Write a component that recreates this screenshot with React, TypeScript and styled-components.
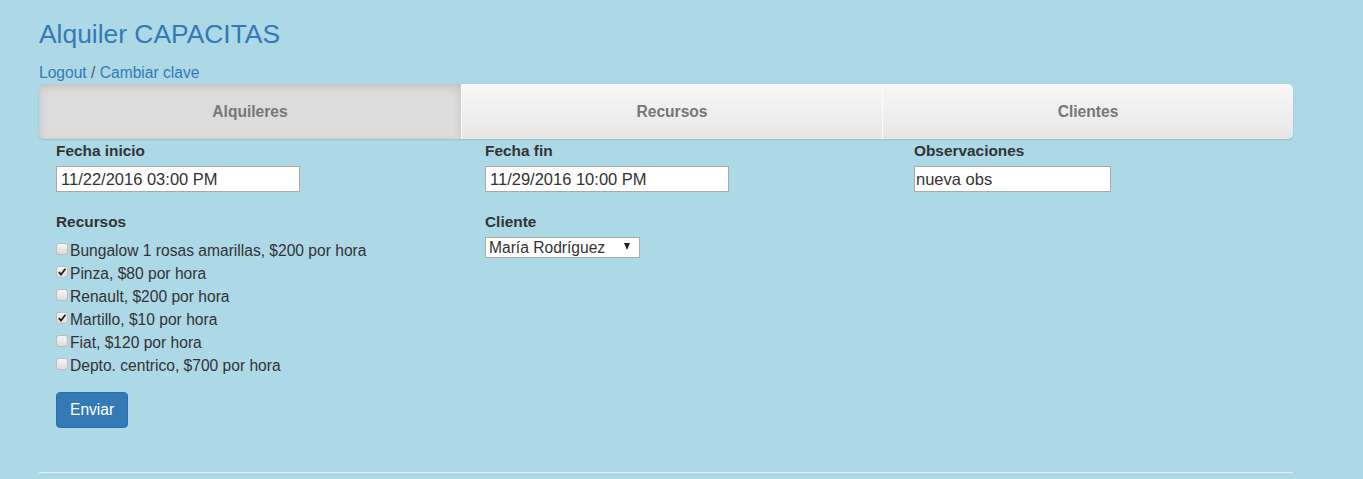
import React from "react";
import styled, { createGlobalStyle, css } from "styled-components";

const Global = createGlobalStyle`
  html, body { margin: 0; padding: 0; background: #add8e6; }
  body {
    font-family: "Liberation Sans", Arial, sans-serif;
    font-size: 15.4px;
    line-height: 22px;
    color: #333;
  }
  * { box-sizing: border-box; }
`;

const Page = styled.div`
  padding: 20px 70px 0 39px;
  width: 1363px;
`;

const Title = styled.h3`
  margin: 0;
  font-size: 26.4px;
  line-height: 29px;
  font-weight: 400;
  color: #337ab7;
`;

const LinkRow = styled.div`
  margin-top: 13px;
  color: #555;
  font-size: 15.6px;
`;

const Link = styled.a`
  color: #337ab7;
  text-decoration: none;
`;

const Tabs = styled.nav`
  display: grid;
  grid-template-columns: 423px 421px 1fr;
  width: 1254px;
  height: 55px;
  border-radius: 5px;
  overflow: hidden;
  box-shadow: 0 1px 2px rgba(0, 0, 0, 0.12);
`;

const Tab = styled.div<{ $active?: boolean; $last?: boolean }>`
  display: flex;
  align-items: center;
  justify-content: center;
  font-weight: 700;
  font-size: 15.6px;
  color: #777;
  border-right: ${(p) => (p.$last ? "none" : "1px solid #fbfbfb")};
  ${(p) =>
    p.$active
      ? css`
          background: #dcdcdc;
          box-shadow: inset 0 3px 8px rgba(0, 0, 0, 0.13);
        `
      : css`
          background: linear-gradient(to bottom, #f7f7f7 0%, #e6e6e6 100%);
        `}
`;

const Form = styled.form`
  display: grid;
  grid-template-columns: 429px 429px 429px;
  padding: 1px 0 0 17px;
`;

const Column = styled.div`
  display: flex;
  flex-direction: column;
  align-items: flex-start;
`;

const Group = styled.div<{ $gap?: number }>`
  display: flex;
  flex-direction: column;
  align-items: flex-start;
  margin-bottom: ${(p) => p.$gap ?? 0}px;
`;

const Label = styled.label`
  font-weight: 700;
  margin-bottom: 4px;
`;

const TextInput = styled.input<{ $w: number }>`
  width: ${(p) => p.$w}px;
  height: 26px;
  border: 1px solid #a9a9a9;
  background: #fff;
  padding: 1px 4px 0;
  font-family: "Liberation Sans", Arial, sans-serif;
  font-size: 16.5px;
  color: #333;
  outline: none;
`;

const ObsInput = styled(TextInput)`
  padding: 1px 1px 0;
`;

const CheckList = styled.div`
  display: flex;
  flex-direction: column;
  margin-top: 2px;
`;

const CheckRow = styled.label`
  display: flex;
  align-items: center;
  line-height: 23px;
  height: 23px;
  font-size: 15.6px;
  color: #333;
`;

const Box = styled.span`
  position: relative;
  width: 12px;
  height: 12px;
  margin: -3px 2px 0 0;
  border: 1px solid #bdbdbd;
  border-radius: 3px;
  background: linear-gradient(to bottom, #f6f6f6, #dcdcdc);
  flex: none;
`;

const Tick = styled.svg`
  position: absolute;
  left: 0px;
  top: 0px;
`;

const SelectWrap = styled.div`
  position: relative;
  width: 155px;
  height: 21px;
`;

const Select = styled.select`
  appearance: none;
  -webkit-appearance: none;
  width: 155px;
  height: 21px;
  border: 1px solid #a9a9a9;
  border-radius: 0;
  background: #fff;
  padding: 0 20px 0 3px;
  font-family: "Liberation Sans", Arial, sans-serif;
  font-size: 15.6px;
  color: #333;
  outline: none;
`;

const Arrow = styled.span`
  position: absolute;
  right: 10px;
  top: 6px;
  width: 0;
  height: 0;
  border-left: 3.5px solid transparent;
  border-right: 3.5px solid transparent;
  border-top: 7px solid #222;
  pointer-events: none;
`;

const Button = styled.button`
  margin-top: 15px;
  height: 36px;
  padding: 0 13px;
  border: 1px solid #2e6da4;
  border-radius: 4px;
  background: #337ab7;
  color: #fff;
  font-family: "Liberation Sans", Arial, sans-serif;
  font-size: 15.6px;
`;

const Rule = styled.hr`
  width: 1254px;
  margin: 44px 0 0;
  border: 0;
  border-top: 1px solid #eee;
`;

const recursos = [
  { t: "Bungalow 1 rosas amarillas, $200 por hora", on: false },
  { t: "Pinza, $80 por hora", on: true },
  { t: "Renault, $200 por hora", on: false },
  { t: "Martillo, $10 por hora", on: true },
  { t: "Fiat, $120 por hora", on: false },
  { t: "Depto. centrico, $700 por hora", on: false },
];

export default function App() {
  return (
    <>
      <Global />
      <Page>
        <Title>Alquiler CAPACITAS</Title>
        <LinkRow>
          <Link href="#">Logout</Link> / <Link href="#">Cambiar clave</Link>
        </LinkRow>
        <Tabs>
          <Tab $active>Alquileres</Tab>
          <Tab>Recursos</Tab>
          <Tab $last>Clientes</Tab>
        </Tabs>
        <Form onSubmit={(e) => e.preventDefault()}>
          <Column>
            <Group $gap={19}>
              <Label>Fecha inicio</Label>
              <TextInput $w={244} defaultValue="11/22/2016 03:00 PM" />
            </Group>
            <Group>
              <Label>Recursos</Label>
              <CheckList>
                {recursos.map((r) => (
                  <CheckRow key={r.t}>
                    <Box>
                      {r.on && (
                        <Tick width="10" height="10" viewBox="0 0 10 10">
                          <path d="M1.8 5.2 L4 7.6 L8.4 1.8" fill="none" stroke="#222" strokeWidth="1.9" />
                        </Tick>
                      )}
                    </Box>
                    {r.t}
                  </CheckRow>
                ))}
              </CheckList>
            </Group>
            <Button type="submit">Enviar</Button>
          </Column>
          <Column>
            <Group $gap={19}>
              <Label>Fecha fin</Label>
              <TextInput $w={244} defaultValue="11/29/2016 10:00 PM" />
            </Group>
            <Group>
              <Label>Cliente</Label>
              <SelectWrap>
                <Select defaultValue="maria">
                  <option value="maria">María Rodríguez</option>
                </Select>
                <Arrow />
              </SelectWrap>
            </Group>
          </Column>
          <Column>
            <Group>
              <Label>Observaciones</Label>
              <ObsInput $w={197} defaultValue="nueva obs" />
            </Group>
          </Column>
        </Form>
        <Rule />
      </Page>
    </>
  );
}
